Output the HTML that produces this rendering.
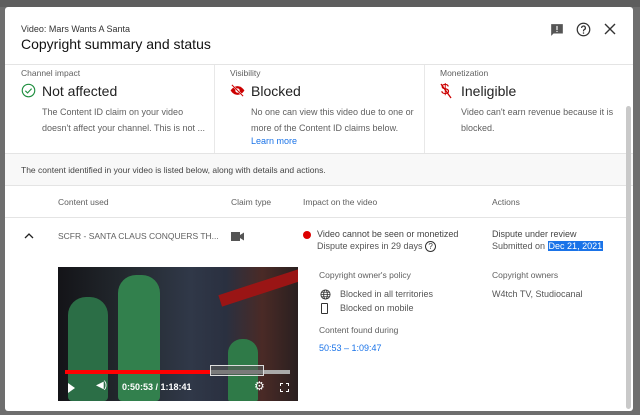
<!DOCTYPE html>
<html><head><style>
*{margin:0;padding:0;box-sizing:border-box}
body{width:640px;height:415px;overflow:hidden;background:#6e6e6e;font-family:"Liberation Sans",Arial,sans-serif;position:relative}
.dlg{position:absolute;left:5px;top:7px;width:628px;height:404px;background:#fff;border-radius:3px;overflow:hidden}
.a{position:absolute;white-space:nowrap}
.g{color:#606060}
.s{font-size:8.5px}
.m{font-size:9px}
</style></head><body>
<div class="a" style="left:0;top:0;width:640px;height:7px;background:#5e5e5e"></div>
<div class="dlg">
 <div class="a" style="left:16px;top:17px;font-size:9px;color:#333">Video: Mars Wants A Santa</div>
 <div class="a" style="left:16px;top:29px;font-size:14px;color:#111">Copyright summary and status</div>
 <svg class="a" style="left:545px;top:16px" width="14" height="14" viewBox="0 0 24 24"><path d="M2 2h20v16H6l-4 4z" fill="#555"/><rect x="11" y="5" width="2" height="7" fill="#fff"/><rect x="11" y="13.5" width="2" height="2" fill="#fff"/></svg>
 <svg class="a" style="left:571px;top:15px" width="15" height="15" viewBox="0 0 24 24"><circle cx="12" cy="12" r="10" fill="none" stroke="#333" stroke-width="2"/><path d="M9 9.5a3 3 0 1 1 4 2.8c-.8.4-1 1-1 2v.7" fill="none" stroke="#333" stroke-width="2"/><circle cx="12" cy="17.5" r="1.2" fill="#333"/></svg>
 <svg class="a" style="left:599px;top:16px" width="12" height="12" viewBox="0 0 12 12"><path d="M1 1l10 10M11 1L1 11" stroke="#333" stroke-width="1.4"/></svg>
 <div class="a" style="left:0;top:57px;width:628px;height:1px;background:#e4e4e4"></div>

 <div class="a g" style="left:16px;top:61px;font-size:8.5px">Channel impact</div>
 <div class="a g" style="left:225px;top:61px;font-size:8.5px">Visibility</div>
 <div class="a g" style="left:435px;top:61px;font-size:8.5px">Monetization</div>
 <div class="a" style="left:209px;top:58px;width:1px;height:89px;background:#e8e8e8"></div>
 <div class="a" style="left:419px;top:58px;width:1px;height:89px;background:#e8e8e8"></div>
 <svg class="a" style="left:16px;top:76px" width="15" height="15" viewBox="0 0 24 24"><circle cx="12" cy="12" r="10" fill="none" stroke="#1e8e3e" stroke-width="1.8"/><path d="M7 12.5l3.5 3.5L17 9" fill="none" stroke="#1e8e3e" stroke-width="1.8"/></svg>
 <div class="a" style="left:37px;top:76px;font-size:14px;color:#222">Not affected</div>
 <div class="a g" style="left:37px;top:97px;font-size:9px;line-height:16px">The Content ID claim on your video<br>doesn't affect your channel. This is not ...</div>
 <svg class="a" style="left:225px;top:76px" width="15" height="15" viewBox="0 0 24 24"><path d="M1 12s4-7 11-7 11 7 11 7-4 7-11 7S1 12 1 12z" fill="#c00"/><circle cx="12" cy="12" r="3.5" fill="#fff"/><path d="M3 3l18 18" stroke="#fff" stroke-width="3"/><path d="M3 3l18 18" stroke="#c00" stroke-width="1.6"/></svg>
 <div class="a" style="left:246px;top:76px;font-size:14px;color:#222">Blocked</div>
 <div class="a g" style="left:246px;top:97px;font-size:9px;line-height:16px">No one can view this video due to one or<br>more of the Content ID claims below.</div>
 <div class="a" style="left:246px;top:129px;font-size:9px;color:#1a73e8">Learn more</div>
 <div class="a" style="left:436px;top:74px;font-size:15px;color:#c00">$</div>
 <svg class="a" style="left:434px;top:76px" width="14" height="16"><path d="M2 1l10 14" stroke="#c00" stroke-width="1.3"/></svg>
 <div class="a" style="left:456px;top:76px;font-size:14px;color:#222">Ineligible</div>
 <div class="a g" style="left:456px;top:97px;font-size:9px;line-height:16px">Video can't earn revenue because it is<br>blocked.</div>

 <div class="a" style="left:0;top:146px;width:628px;height:33px;background:#f8f8f8;border-top:1px solid #e4e4e4;border-bottom:1px solid #e4e4e4"></div>
 <div class="a" style="left:16px;top:158px;font-size:8.5px;color:#444">The content identified in your video is listed below, along with details and actions.</div>
 <div class="a g s" style="left:53px;top:190px">Content used</div>
 <div class="a g s" style="left:226px;top:190px">Claim type</div>
 <div class="a g s" style="left:298px;top:190px">Impact on the video</div>
 <div class="a g s" style="left:487px;top:190px">Actions</div>
 <div class="a" style="left:0;top:210px;width:622px;height:1px;background:#e4e4e4"></div>

 <svg class="a" style="left:19px;top:225px" width="10" height="8"><path d="M1 6l4-4 4 4" fill="none" stroke="#222" stroke-width="1.3"/></svg>
 <div class="a g s" style="left:53px;top:224px">SCFR - SANTA CLAUS CONQUERS TH...</div>
 <svg class="a" style="left:226px;top:224px" width="14" height="11" viewBox="0 0 14 11"><rect x="0" y="1" width="9" height="9" fill="#555"/><path d="M9 4l4-2.5v8L9 7z" fill="#555"/></svg>
 <div class="a" style="left:298px;top:224px;width:8px;height:8px;border-radius:50%;background:#d00"></div>
 <div class="a m" style="left:312px;top:222px;color:#444">Video cannot be seen or monetized</div>
 <div class="a m" style="left:312px;top:234px;color:#555">Dispute expires in 29 days <span style="display:inline-block;width:11px;height:11px;border:1px solid #333;border-radius:50%;font-size:8px;text-align:center;line-height:9px;color:#333;vertical-align:middle">?</span></div>
 <div class="a m" style="left:487px;top:222px;color:#444">Dispute under review</div>
 <div class="a m" style="left:487px;top:234px;color:#555">Submitted on <span style="background:#1a73e8;color:#fff;padding:0 1px">Dec 21, 2021</span></div>

 <div class="a" style="left:53px;top:260px;width:240px;height:134px;overflow:hidden;background:linear-gradient(90deg,#141418 0%,#242a30 30%,#303848 55%,#2a3040 70%,#4a2a26 85%,#2a2020 100%)">
  <div class="a" style="left:10px;top:30px;width:40px;height:104px;background:#2b6e46;border-radius:18px 18px 4px 4px"></div>
  <div class="a" style="left:60px;top:8px;width:42px;height:126px;background:#32804d;border-radius:18px 18px 4px 4px"></div>
  <div class="a" style="left:170px;top:72px;width:30px;height:62px;background:#2f7a48;border-radius:14px 14px 2px 2px"></div>
  <div class="a" style="left:160px;top:14px;width:90px;height:12px;background:#9a1515;transform:rotate(-18deg)"></div>
  <div class="a" style="left:7px;top:103px;width:145px;height:4px;background:#f00"></div>
  <div class="a" style="left:152px;top:103px;width:80px;height:4px;background:#aaa"></div>
  <div class="a" style="left:152px;top:98px;width:54px;height:11px;border:1px solid #ddd;background:rgba(90,90,90,.6)"></div>
  <div class="a" style="left:10px;top:116px;width:0;height:0;border-left:7px solid #fff;border-top:5px solid transparent;border-bottom:5px solid transparent"></div>
  <div class="a" style="left:38px;top:113px;font-size:10px;color:#fff">◀)</div>
  <div class="a" style="left:64px;top:115px;font-size:9px;color:#fff;font-weight:bold">0:50:53 / 1:18:41</div>
  <div class="a" style="left:196px;top:112px;font-size:12px;color:#fff">⚙</div>
  <div class="a" style="left:222px;top:116px;width:9px;height:9px;border:1.5px dashed #fff"></div>
 </div>

 <div class="a g s" style="left:314px;top:263px">Copyright owner's policy</div>
 <svg class="a" style="left:315px;top:282px" width="11" height="11" viewBox="0 0 24 24"><circle cx="12" cy="12" r="10" fill="none" stroke="#333" stroke-width="2"/><ellipse cx="12" cy="12" rx="4" ry="10" fill="none" stroke="#333" stroke-width="2"/><path d="M2 12h20M4 7h16M4 17h16" stroke="#333" stroke-width="1.6"/></svg>
 <div class="a m" style="left:335px;top:282px;color:#555">Blocked in all territories</div>
 <div class="a" style="left:316px;top:296px;width:7px;height:11px;border:1.5px solid #333;border-radius:1px"></div>
 <div class="a m" style="left:335px;top:296px;color:#555">Blocked on mobile</div>
 <div class="a g s" style="left:314px;top:318px">Content found during</div>
 <div class="a m" style="left:314px;top:336px;color:#1a73e8">50:53 – 1:09:47</div>
 <div class="a g s" style="left:487px;top:263px">Copyright owners</div>
 <div class="a m" style="left:487px;top:282px;color:#555">W4tch TV, Studiocanal</div>

 <div class="a" style="left:621px;top:99px;width:5px;height:303px;background:#c9c9c9;border-radius:3px"></div>
</div>
</body></html>
